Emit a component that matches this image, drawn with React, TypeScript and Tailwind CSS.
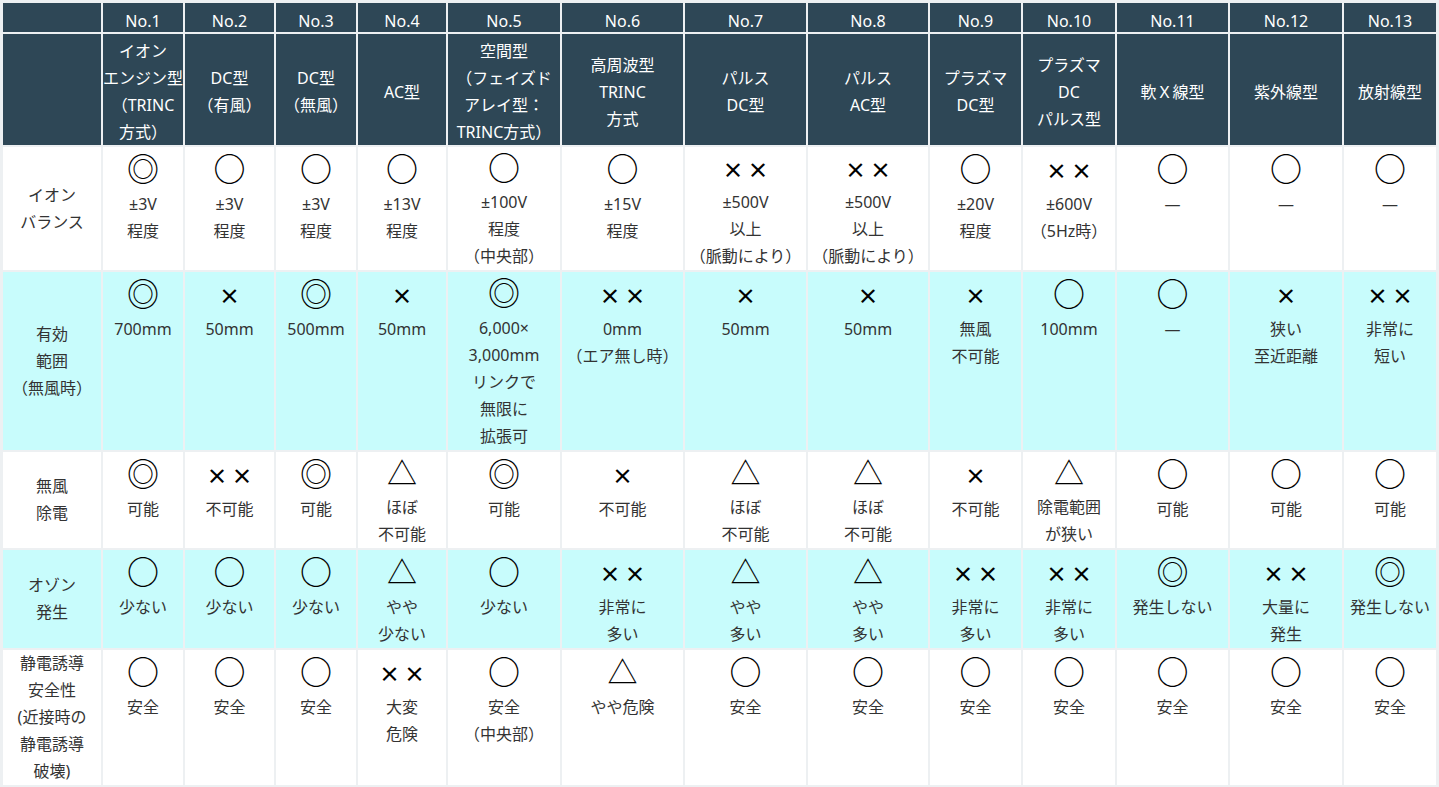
import React from 'react';

type Cell = { s: string; t: string[] };

const heads: { no: string; name: string[] }[] = [
  { no: 'No.1', name: ['イオン', 'エンジン型', '（TRINC', '方式）'] },
  { no: 'No.2', name: ['DC型', '（有風）'] },
  { no: 'No.3', name: ['DC型', '（無風）'] },
  { no: 'No.4', name: ['AC型'] },
  { no: 'No.5', name: ['空間型', '（フェイズド', 'アレイ型：', 'TRINC方式）'] },
  { no: 'No.6', name: ['高周波型', 'TRINC', '方式'] },
  { no: 'No.7', name: ['パルス', 'DC型'] },
  { no: 'No.8', name: ['パルス', 'AC型'] },
  { no: 'No.9', name: ['プラズマ', 'DC型'] },
  { no: 'No.10', name: ['プラズマ', 'DC', 'パルス型'] },
  { no: 'No.11', name: ['軟Ｘ線型'] },
  { no: 'No.12', name: ['紫外線型'] },
  { no: 'No.13', name: ['放射線型'] },
];

const c = (s: string, ...t: string[]): Cell => ({ s, t });

const rows: { label: string[]; cyan: boolean; cells: Cell[] }[] = [
  {
    label: ['イオン', 'バランス'],
    cyan: false,
    cells: [
      c('◎', '±3V', '程度'),
      c('○', '±3V', '程度'),
      c('○', '±3V', '程度'),
      c('○', '±13V', '程度'),
      c('○', '±100V', '程度', '（中央部）'),
      c('○', '±15V', '程度'),
      c('××', '±500V', '以上', '（脈動により）'),
      c('××', '±500V', '以上', '（脈動により）'),
      c('○', '±20V', '程度'),
      c('××', '±600V', '（5Hz時）'),
      c('○', '―'),
      c('○', '―'),
      c('○', '―'),
    ],
  },
  {
    label: ['有効', '範囲', '（無風時）'],
    cyan: true,
    cells: [
      c('◎', '700mm'),
      c('×', '50mm'),
      c('◎', '500mm'),
      c('×', '50mm'),
      c('◎', '6,000×', '3,000mm', 'リンクで', '無限に', '拡張可'),
      c('××', '0mm', '（エア無し時）'),
      c('×', '50mm'),
      c('×', '50mm'),
      c('×', '無風', '不可能'),
      c('○', '100mm'),
      c('○', '―'),
      c('×', '狭い', '至近距離'),
      c('××', '非常に', '短い'),
    ],
  },
  {
    label: ['無風', '除電'],
    cyan: false,
    cells: [
      c('◎', '可能'),
      c('××', '不可能'),
      c('◎', '可能'),
      c('△', 'ほぼ', '不可能'),
      c('◎', '可能'),
      c('×', '不可能'),
      c('△', 'ほぼ', '不可能'),
      c('△', 'ほぼ', '不可能'),
      c('×', '不可能'),
      c('△', '除電範囲', 'が狭い'),
      c('○', '可能'),
      c('○', '可能'),
      c('○', '可能'),
    ],
  },
  {
    label: ['オゾン', '発生'],
    cyan: true,
    cells: [
      c('○', '少ない'),
      c('○', '少ない'),
      c('○', '少ない'),
      c('△', 'やや', '少ない'),
      c('○', '少ない'),
      c('××', '非常に', '多い'),
      c('△', 'やや', '多い'),
      c('△', 'やや', '多い'),
      c('××', '非常に', '多い'),
      c('××', '非常に', '多い'),
      c('◎', '発生しない'),
      c('××', '大量に', '発生'),
      c('◎', '発生しない'),
    ],
  },
  {
    label: ['静電誘導', '安全性', '(近接時の', '静電誘導', '破壊)'],
    cyan: false,
    cells: [
      c('○', '安全'),
      c('○', '安全'),
      c('○', '安全'),
      c('××', '大変', '危険'),
      c('○', '安全', '（中央部）'),
      c('△', 'やや危険'),
      c('○', '安全'),
      c('○', '安全'),
      c('○', '安全'),
      c('○', '安全'),
      c('○', '安全'),
      c('○', '安全'),
      c('○', '安全'),
    ],
  },
];

const cjk = { fontFamily: '"Noto Sans CJK JP", sans-serif' };

function Mark({ s }: { s: string }) {
  if (s === '××') {
    return (
      <span className="flex gap-[4px] pt-[7px] text-[21px] font-bold text-black" style={cjk}>
        <span>×</span>
        <span>×</span>
      </span>
    );
  }
  if (s === '×')
    return (
      <span className="pt-[7px] text-[21px] font-bold text-black" style={cjk}>
        ×
      </span>
    );
  if (s === '△')
    return (
      <span className="text-[30px] text-black" style={cjk}>
        △
      </span>
    );
  if (s === '◎')
    return (
      <span className="text-[32px] text-black" style={cjk}>
        ◎
      </span>
    );
  return (
    <span className="text-[32px] font-medium text-black" style={cjk}>
      ○
    </span>
  );
}

export default function App() {
  return (
    <div
      className="w-[1439px] h-[787px] overflow-hidden bg-[#edf0f2] pt-[3px] pl-[3px] text-[16px] text-[#333]"
      style={{ fontFamily: '"Noto Sans", "Noto Sans CJK JP", sans-serif' }}
    >
      <div className="grid grid-cols-[98px_80px_89px_80px_88px_112px_121px_121px_120px_91px_92px_111px_112px_92px] grid-rows-[29px_111px_123px_178px_96px_98px_135px] gap-[2px]">
        <div className="bg-[#2e4756]" />
        {heads.map((h) => (
          <div key={h.no} className="bg-[#2e4756] text-white text-center leading-[20px] pt-[8px]">
            {h.no}
          </div>
        ))}
        <div className="bg-[#2e4756]" />
        {heads.map((h) => (
          <div
            key={h.no + 'n'}
            className="bg-[#2e4756] text-white text-center leading-[27px] pt-[5px] flex flex-col items-center justify-center"
          >
            {h.name.map((l, i) => (
              <span key={i} className="whitespace-nowrap">
                {l}
              </span>
            ))}
          </div>
        ))}
        {rows.map((r, ri) => (
          <React.Fragment key={ri}>
            <div
              className={`${r.cyan ? 'bg-[#c8fcfc]' : 'bg-white'} flex flex-col items-center justify-center leading-[27px] text-center`}
            >
              {r.label.map((l, i) => (
                <span key={i} className="whitespace-nowrap">
                  {l}
                </span>
              ))}
            </div>
            {r.cells.map((cell, ci) => (
              <div
                key={ci}
                className={`${r.cyan ? 'bg-[#c8fcfc]' : 'bg-white'} flex flex-col items-center text-center`}
              >
                <div className="h-[44px] pb-[5px] flex items-center justify-center leading-none">
                  <Mark s={cell.s} />
                </div>
                <div className="flex flex-col items-center leading-[27px]">
                  {cell.t.map((l, i) => (
                    <span key={i} className="whitespace-nowrap">
                      {l}
                    </span>
                  ))}
                </div>
              </div>
            ))}
          </React.Fragment>
        ))}
      </div>
    </div>
  );
}
